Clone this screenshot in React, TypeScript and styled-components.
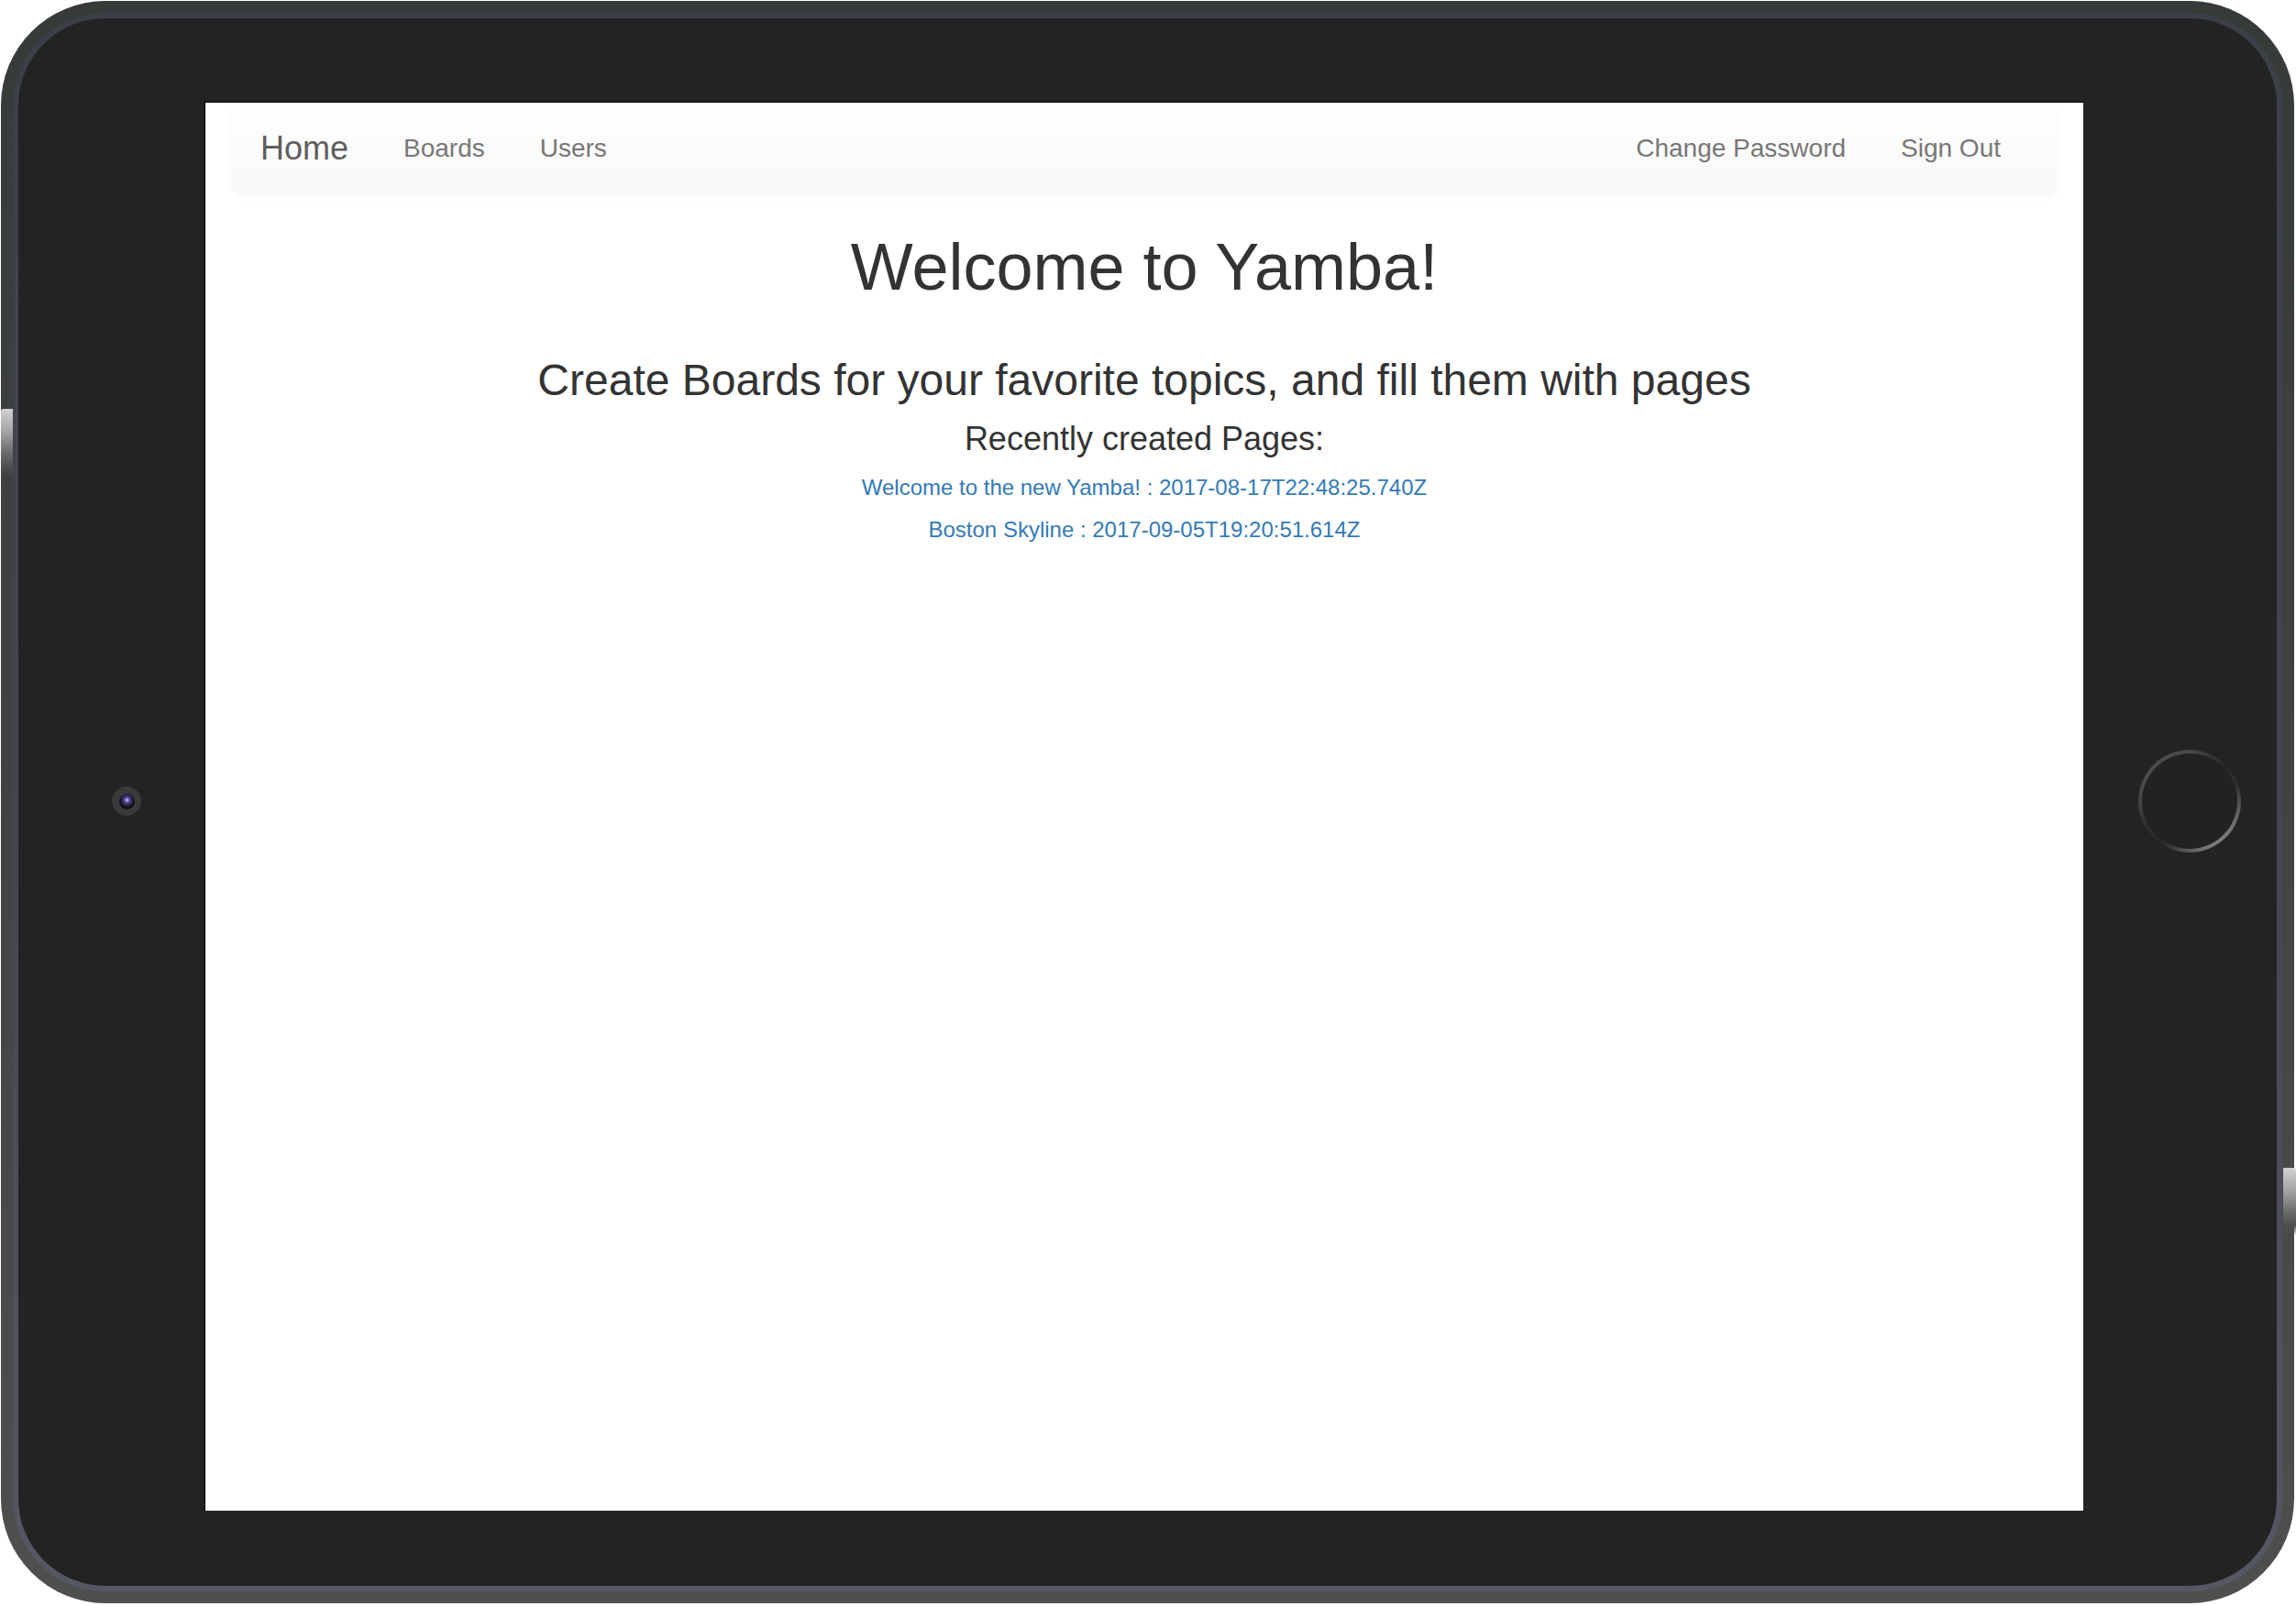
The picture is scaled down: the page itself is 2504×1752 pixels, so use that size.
import React from "react";
import styled, { createGlobalStyle } from "styled-components";

const GlobalStyle = createGlobalStyle`
  html, body {
    margin: 0;
    padding: 0;
    background: #ffffff;
  }
  body {
    font-family: "Liberation Sans", Arial, Helvetica, sans-serif;
    width: 2504px;
    height: 1752px;
    overflow: hidden;
  }
  * { box-sizing: border-box; }
`;

const Tablet = styled.div`
  position: relative;
  width: 2501px;
  height: 1748px;
  margin: 1px 0 0 1px;
  padding: 13px;
  border-radius: 114px;
  background: linear-gradient(to bottom, #373b37 0%, #3f423f 45%, #4e504e 100%);
`;

const Bezel = styled.div`
  height: 100%;
  padding: 6px;
  border-radius: 101px;
  background: linear-gradient(to bottom, #3b3f48 0%, #434651 50%, #555864 100%);
`;

const Body = styled.div`
  height: 100%;
  border-radius: 95px;
  background: #232323;
  display: grid;
  grid-template-columns: 203px 2049px 1fr;
  padding: 91px 0 82px;
`;

const SideButton = styled.div<{ $side: "left" | "right"; $top: number }>`
  position: absolute;
  top: ${(p) => p.$top}px;
  ${(p) => (p.$side === "left" ? "left: 0;" : "right: -2px;")}
  width: ${(p) => (p.$side === "left" ? 13 : 14)}px;
  height: 74px;
  border-radius: ${(p) => (p.$side === "left" ? "3px 0 0 3px" : "0 3px 3px 0")};
  background: linear-gradient(
    to bottom,
    #d2d2d2 0%,
    #a9a9a9 30%,
    #6f716f 62%,
    #4d4f4d 85%,
    rgba(75, 77, 75, 0) 100%
  );
`;

const CameraSlot = styled.div`
  align-self: start;
  justify-self: start;
  margin-top: 747px;
  margin-left: 102px;
`;

const Camera = styled.div`
  width: 32px;
  height: 32px;
  border-radius: 50%;
  background: #3a3a3a;
  display: flex;
  align-items: center;
  justify-content: center;
`;

const Lens = styled.div`
  width: 17px;
  height: 17px;
  border-radius: 50%;
  background: radial-gradient(
    circle at 50% 40%,
    #d9d4f0 0px,
    #8a7cc0 1.5px,
    #4a3a86 3.5px,
    #2d2550 5.5px,
    #121218 7.5px
  );
`;

const Screen = styled.div`
  background: #ffffff;
  border-top: 1px solid #000000;
  border-left: 1px solid #000000;
  overflow: hidden;
  color: #333333;
`;

const Container = styled.div`
  padding: 0 30px;
`;

const Navbar = styled.nav`
  display: flex;
  align-items: center;
  height: 100px;
  margin-bottom: 40px;
  padding-right: 30px;
  border-radius: 8px;
  background: linear-gradient(to bottom, #ffffff 0%, #f8f8f8 100%);
  box-shadow: 0 2px 10px rgba(0, 0, 0, 0.035);
`;

const Brand = styled.a`
  padding: 0 30px;
  font-size: 36px;
  line-height: 40px;
  color: #5e5e5e;
  text-decoration: none;
`;

const NavList = styled.ul<{ $right?: boolean }>`
  display: flex;
  list-style: none;
  margin: 0 0 0 ${(p) => (p.$right ? "auto" : "0")};
  padding: 0;
`;

const NavLink = styled.a`
  display: block;
  padding: 0 30px;
  font-size: 28px;
  line-height: 40px;
  color: #777777;
  text-decoration: none;
`;

const Main = styled.main`
  text-align: center;
`;

const Title = styled.h1`
  margin: 40px 0 20px;
  font-size: 72px;
  line-height: 79.2px;
  font-weight: 400;
  color: #333333;
`;

const Subtitle = styled.h3`
  margin: 61px 0 20px;
  font-size: 48px;
  line-height: 46.8px;
  font-weight: 400;
  color: #333333;
`;

const SectionTitle = styled.h4`
  margin: 20px 0;
  font-size: 36px;
  line-height: 39.6px;
  font-weight: 400;
  color: #333333;
`;

const PageItem = styled.h6`
  margin: 20px 0;
  font-size: 24px;
  line-height: 26.4px;
  font-weight: 400;
`;

const PageLink = styled.a`
  color: #337ab7;
  text-decoration: none;
`;

const HomeSlot = styled.div`
  align-self: start;
  justify-self: start;
  margin-top: 707px;
  margin-left: 60px;
`;

const HomeRing = styled.div`
  width: 112px;
  height: 112px;
  border-radius: 50%;
  padding: 4px;
  background: conic-gradient(
    from 0deg,
    #4a4a4a 0deg,
    #353535 25deg,
    #262626 45deg,
    #2e2e2e 70deg,
    #5e5e5e 100deg,
    #7c7c7c 135deg,
    #737373 165deg,
    #4e4e4e 190deg,
    #262626 215deg,
    #2c2c2c 240deg,
    #434343 265deg,
    #4c4c4c 300deg,
    #4a4a4a 360deg
  );
`;

const HomeFace = styled.div`
  width: 100%;
  height: 100%;
  border-radius: 50%;
  background: #222222;
`;

const pages = [
  "Welcome to the new Yamba! : 2017-08-17T22:48:25.740Z",
  "Boston Skyline : 2017-09-05T19:20:51.614Z",
];

export default function App() {
  return (
    <>
      <GlobalStyle />
      <Tablet>
        <SideButton $side="left" $top={445} />
        <SideButton $side="right" $top={1273} />
        <Bezel>
          <Body>
            <CameraSlot>
              <Camera>
                <Lens />
              </Camera>
            </CameraSlot>
            <Screen>
              <Container>
                <Navbar>
                  <Brand href="#">Home</Brand>
                  <NavList>
                    <li>
                      <NavLink href="#">Boards</NavLink>
                    </li>
                    <li>
                      <NavLink href="#">Users</NavLink>
                    </li>
                  </NavList>
                  <NavList $right>
                    <li>
                      <NavLink href="#">Change Password</NavLink>
                    </li>
                    <li>
                      <NavLink href="#">Sign Out</NavLink>
                    </li>
                  </NavList>
                </Navbar>
                <Main>
                  <Title>Welcome to Yamba!</Title>
                  <Subtitle>
                    Create Boards for your favorite topics, and fill them with pages
                  </Subtitle>
                  <SectionTitle>Recently created Pages:</SectionTitle>
                  {pages.map((p) => (
                    <PageItem key={p}>
                      <PageLink href="#">{p}</PageLink>
                    </PageItem>
                  ))}
                </Main>
              </Container>
            </Screen>
            <HomeSlot>
              <HomeRing>
                <HomeFace />
              </HomeRing>
            </HomeSlot>
          </Body>
        </Bezel>
      </Tablet>
    </>
  );
}
